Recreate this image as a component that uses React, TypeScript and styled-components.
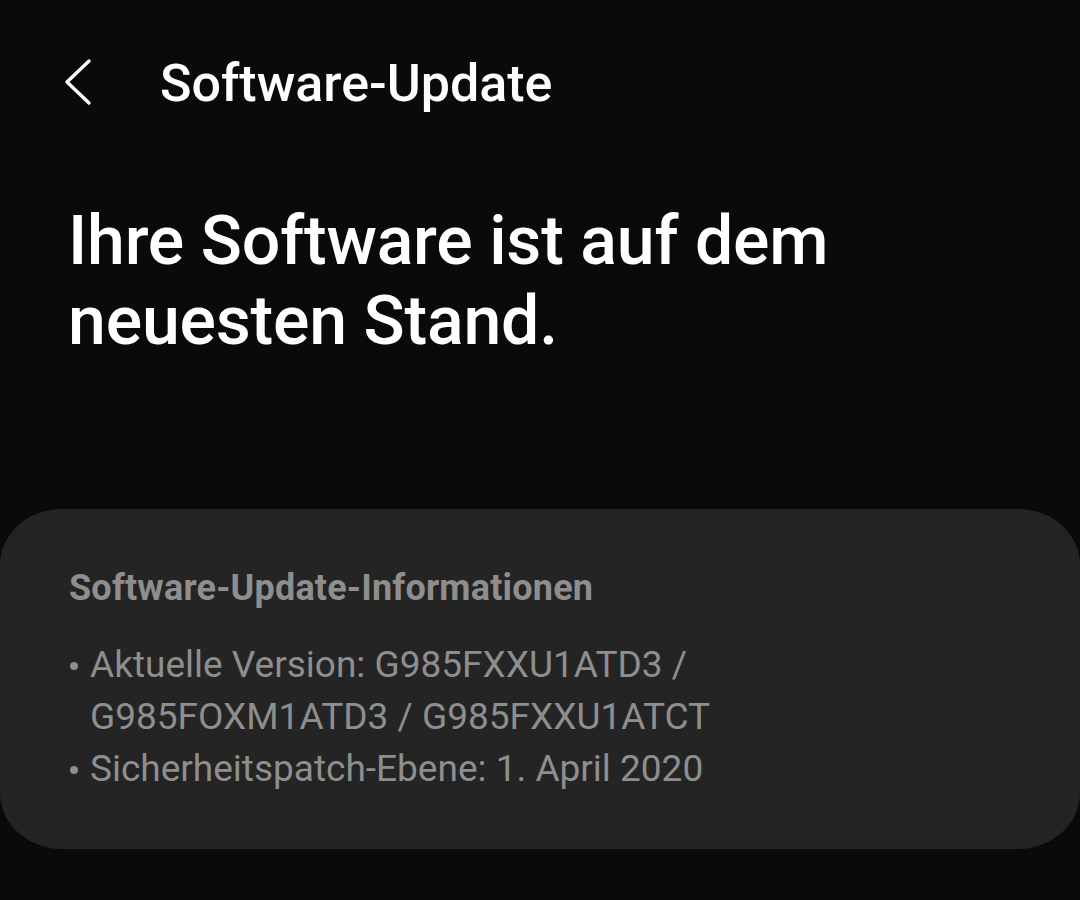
import React from 'react'
import styled, { createGlobalStyle } from 'styled-components'

const GlobalStyle = createGlobalStyle`
    html, body {
        margin: 0;
        padding: 0;
        background: #0a0a0a;
    }
    body {
        font-family: Roboto, "Noto Sans", "Liberation Sans", sans-serif;
        -webkit-font-smoothing: antialiased;
    }
`

const App: React.FC = () => {
    return (
        <Screen>
            <GlobalStyle />
            <Header>
                <BackButton aria-label="Zurück">
                    <svg width="32" height="48" viewBox="0 0 32 48" fill="none">
                        <path d="M27 3 L5 24 L27 45" stroke="#fff" strokeWidth="3.4" strokeLinecap="round" strokeLinejoin="round" />
                    </svg>
                </BackButton>
                <Title>Software-Update</Title>
            </Header>

            <Status>
                Ihre Software ist auf dem
                <br />
                neuesten Stand.
            </Status>

            <InfoCard>
                <InfoTitle>Software-Update-Informationen</InfoTitle>
                <InfoList>
                    <InfoItem>Aktuelle Version: G985FXXU1ATD3 / G985FOXM1ATD3 / G985FXXU1ATCT</InfoItem>
                    <InfoItem>Sicherheitspatch-Ebene: 1. April 2020</InfoItem>
                </InfoList>
            </InfoCard>
        </Screen>
    )
}

const Screen = styled.div`
    width: 1080px;
    height: 900px;
    background: #0a0a0a;
    color: #fff;
    overflow: hidden;
    display: flex;
    flex-direction: column;
`

const Header = styled.div`
    height: 164px;
    display: flex;
    align-items: flex-start;
    padding-top: 56px;
    box-sizing: border-box;
`

const BackButton = styled.div`
    width: 32px;
    height: 48px;
    margin-left: 62px;
    margin-top: 2px;
    display: flex;
`

const Title = styled.div`
    margin-left: 66px;
    font-size: 52px;
    font-weight: 500;
    line-height: 56px;
`

const Status = styled.div`
    padding-left: 68px;
    margin-top: 37px;
    font-size: 68px;
    font-weight: 500;
    line-height: 80px;
    letter-spacing: -0.2px;
`

const InfoCard = styled.div`
    margin-top: 148px;
    height: 340px;
    background: #242424;
    border-radius: 62px / 56px;
    padding: 58px 0 0 69px;
    box-sizing: border-box;
`

const InfoTitle = styled.div`
    color: #8e8e8e;
    font-size: 36px;
    font-weight: 700;
    line-height: 42px;
    letter-spacing: 0.2px;
`

const InfoList = styled.ul`
    list-style: none;
    margin: 30px 0 0;
    padding: 0;
    width: 660px;
`

const InfoItem = styled.li`
    position: relative;
    padding-left: 21px;
    color: #8e8e8e;
    font-size: 37px;
    line-height: 52px;

    &::before {
        content: '';
        position: absolute;
        left: 1px;
        top: 23px;
        width: 8px;
        height: 8px;
        border-radius: 50%;
        background: #8e8e8e;
    }
`

export default App
